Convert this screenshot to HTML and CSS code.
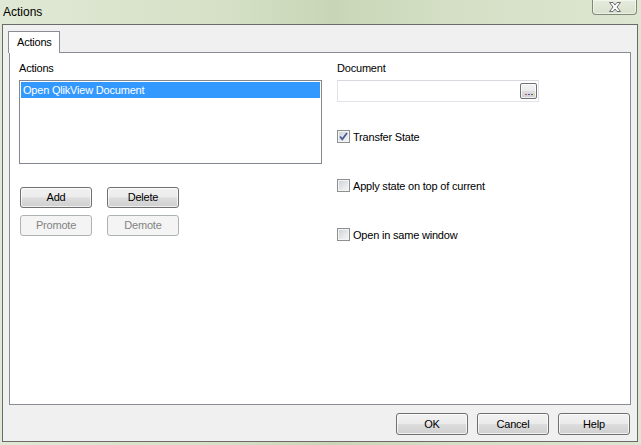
FILE: index.html
```html
<!DOCTYPE html>
<html>
<head>
<meta charset="utf-8">
<link rel="stylesheet" href="styles.css">
</head>
<body>
<div class="window">
  <div class="titlebar">
    <span class="title">Actions</span>
    <div class="close">
      <svg width="16" height="12" viewBox="0 0 16 12">
        <path d="M2.5 1.5 H6 L8 4 L10 1.5 H13.5 L10 6 L13.5 10.5 H10 L8 8 L6 10.5 H2.5 L6 6 Z" fill="#fbfbfb" stroke="#6b6f73" stroke-width="1" stroke-linejoin="round"/>
      </svg>
    </div>
  </div>
  <div class="frame">
    <div class="tabs">
      <div class="tab">Actions</div>
    </div>
    <div class="panel">
      <div class="col-left">
        <div class="label">Actions</div>
        <div class="listbox">
          <div class="row selected">Open QlikView Document</div>
        </div>
        <div class="btn-grid">
          <button class="btn">Add</button>
          <button class="btn">Delete</button>
          <button class="btn disabled">Promote</button>
          <button class="btn disabled">Demote</button>
        </div>
      </div>
      <div class="col-right">
        <div class="label">Document</div>
        <div class="input">
          <span class="browse"><span class="dots"><i class="d1"></i><i class="d2"></i><i class="d3"></i></span></span>
        </div>
        <div class="check first">
          <span class="box">
            <svg width="9" height="9" viewBox="0 0 9 9"><path d="M1 4.5 L3.3 7.3 L8 1" fill="none" stroke="#4a5c95" stroke-width="1.8"/></svg>
          </span>
          <span>Transfer State</span>
        </div>
        <div class="check">
          <span class="box"></span>
          <span>Apply state on top of current</span>
        </div>
        <div class="check">
          <span class="box"></span>
          <span>Open in same window</span>
        </div>
      </div>
    </div>
    <div class="footer">
      <button class="btn">OK</button>
      <button class="btn">Cancel</button>
      <button class="btn">Help</button>
    </div>
  </div>
</div>
</body>
</html>
```

FILE: styles.css
```css
* { box-sizing: border-box; }
html, body {
  margin: 0;
  padding: 0;
}
body {
  width: 641px;
  height: 445px;
  background: #d9e3cb;
  font-family: "Liberation Sans", Arial, sans-serif;
  font-size: 11px;
  letter-spacing: -0.2px;
  color: #000;
  overflow: hidden;
}
.window {
  width: 641px;
  height: 445px;
  display: flex;
  flex-direction: column;
  background: linear-gradient(to right, #e0e9d5 0%, #d5e0c6 35%, #c9d6b6 52%, #d4dfc5 70%, #dde6d1 100%);
}
.titlebar {
  height: 24px;
  display: flex;
  align-items: flex-start;
}
.title {
  font-size: 12px;
  line-height: 24px;
  padding-left: 3px;
  letter-spacing: 0;
  color: #000;
}
.close {
  margin-left: auto;
  margin-right: 4px;
  width: 45px;
  height: 15px;
  border: 1px solid #7f8a76;
  border-top: none;
  border-radius: 0 0 4px 4px;
  background: linear-gradient(#e6ecdd, #d8e1cc);
  box-shadow: inset 0 0 0 1px rgba(255,255,255,0.5);
  display: flex;
  align-items: center;
  justify-content: center;
}
.frame {
  margin: 0 3px 0 2px;
  height: 418px;
  border: 1px solid #6b6b6b;
  background: #f0f0f0;
  padding: 6px 6px 0 6px;
  display: flex;
  flex-direction: column;
}
.tabs {
  display: flex;
  height: 21px;
  margin-left: -1px;
  position: relative;
  z-index: 1;
}
.tab {
  width: 52px;
  height: 22px;
  border: 1px solid #898c95;
  border-bottom: none;
  background: #fff;
  padding: 4px 0 0 8px;
  line-height: 13px;
}
.panel {
  height: 353px;
  border: 1px solid #898c95;
  background: #fff;
  display: flex;
  padding: 8px 0 0 9px;
}
.col-left {
  width: 303px;
}
.col-right {
  margin-left: 15px;
  width: 202px;
}
.label {
  line-height: 14px;
  height: 14px;
}
.listbox {
  margin-top: 5px;
  height: 84px;
  border: 1px solid #828790;
  padding: 1px;
}
.row {
  height: 16px;
  line-height: 16px;
  padding-left: 2px;
}
.row.selected {
  background: #3399ff;
  color: #fff;
}
.btn-grid {
  margin-top: 23px;
  margin-left: 1px;
  display: grid;
  grid-template-columns: 72px 72px;
  column-gap: 15px;
  row-gap: 7px;
}
.btn {
  width: 72px;
  height: 21px;
  font-family: "Liberation Sans", Arial, sans-serif;
  font-size: 11px;
  letter-spacing: -0.2px;
  color: #000;
  border: 1px solid #707070;
  border-radius: 3px;
  background: linear-gradient(#f2f2f2 0%, #ebebeb 48%, #dddddd 52%, #cfcfcf 100%);
  box-shadow: inset 0 0 0 1px rgba(255,255,255,0.7);
  padding: 0;
  line-height: 19px;
  text-align: center;
}
.btn.disabled {
  border-color: #adb2b5;
  background: #f4f4f4;
  color: #838383;
  box-shadow: none;
}
.input {
  margin-top: 5px;
  height: 22px;
  border: 1px solid #e2e3ea;
  border-top-color: #d8d9de;
  background: #fff;
  display: flex;
  justify-content: flex-end;
  padding: 2px 1px 0 0;
}
.browse {
  width: 17px;
  height: 16px;
  border: 1px solid #707070;
  border-radius: 2px;
  background: linear-gradient(#f2f2f2 0%, #ebebeb 48%, #dddddd 52%, #cfcfcf 100%);
  box-shadow: inset 0 0 0 1px rgba(255,255,255,0.7);
  display: flex;
  align-items: flex-end;
  justify-content: center;
  padding-bottom: 3px;
}
.dots {
  display: flex;
  gap: 1px;
}
.dots i {
  display: block;
  width: 2px;
  height: 1px;
}
.dots .d1 { background: #c05050; }
.dots .d2 { background: #5050c0; }
.dots .d3 { background: #806020; }
.check {
  display: flex;
  align-items: center;
  height: 13px;
  margin-top: 36px;
}
.check.first {
  margin-top: 28px;
}
.box {
  width: 13px;
  height: 13px;
  border: 1px solid #8e8f8f;
  background: linear-gradient(135deg, #cbcfd5 0%, #e7e9ec 60%, #f7f7f7 100%);
  box-shadow: inset 0 0 0 1px #f4f4f4;
  margin-right: 3px;
  display: flex;
  align-items: center;
  justify-content: center;
}
.footer {
  display: flex;
  justify-content: flex-end;
  gap: 9px;
  margin-top: 8px;
  margin-right: 1px;
}
.footer .btn {
  height: 22px;
  line-height: 20px;
}
```
